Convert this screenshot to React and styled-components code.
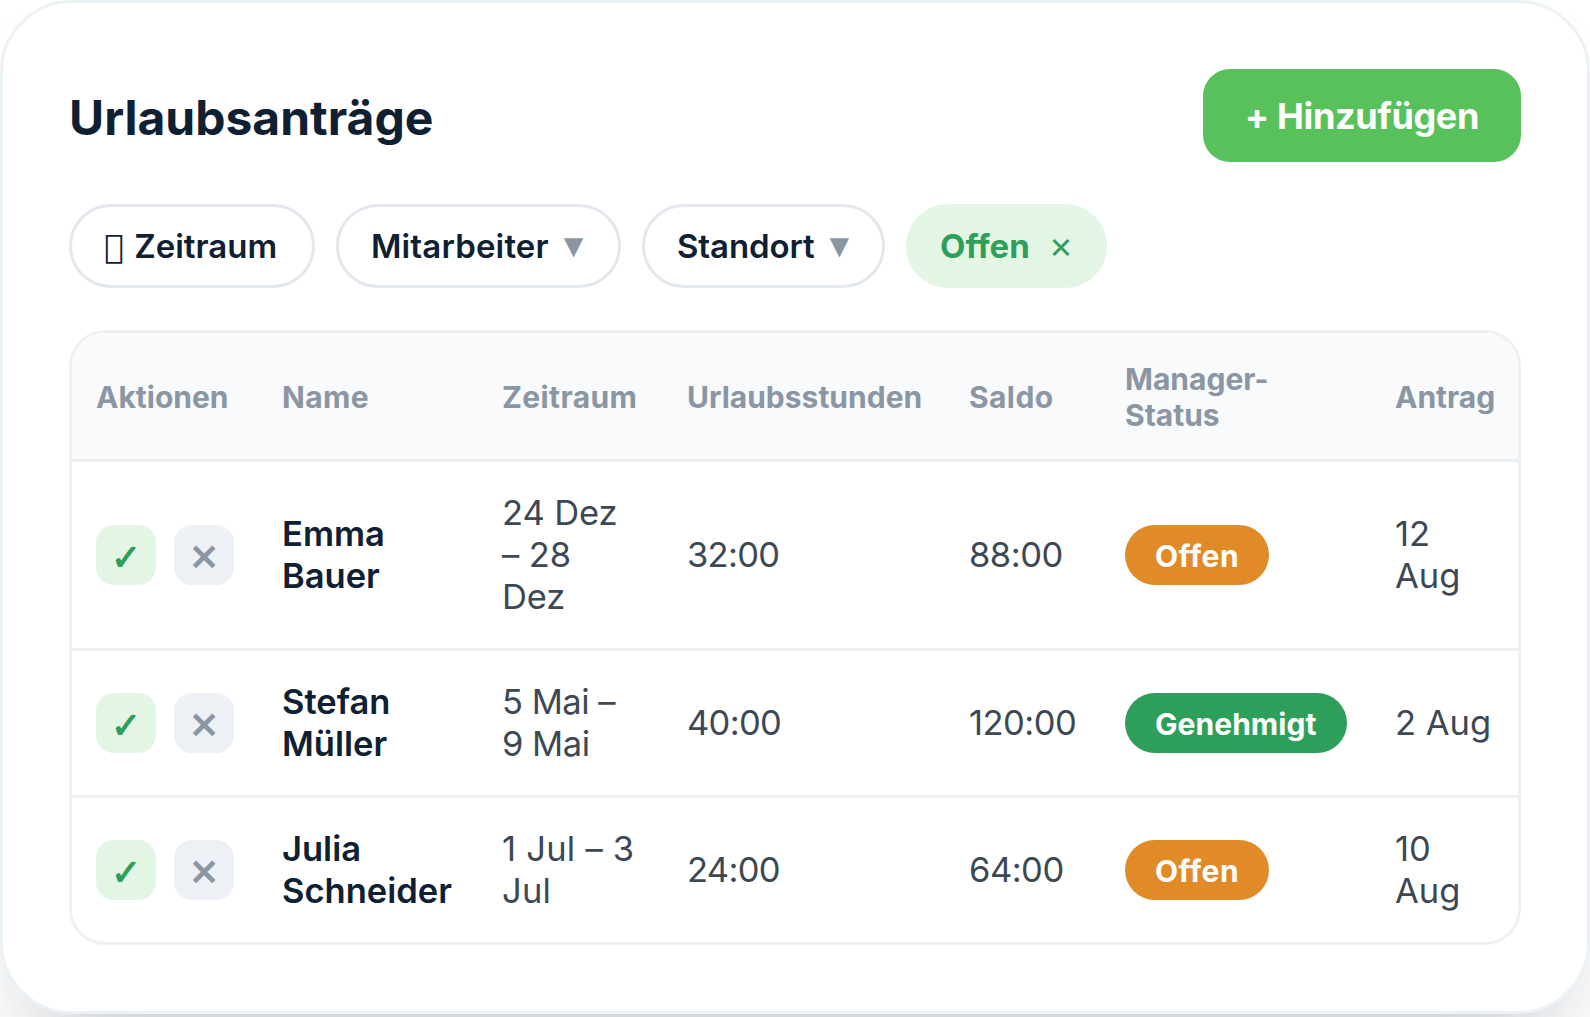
import React from "react";
import styled, { createGlobalStyle } from "styled-components";

const requests = [
  { name: "Emma Bauer", period: "24 Dez – 28 Dez", tracking: -0.1, hours: "32:00", balance: "88:00", status: "Offen", date: "12 Aug" },
  { name: "Stefan Müller", period: "5 Mai – 9 Mai", tracking: -0.5, hours: "40:00", balance: "120:00", status: "Genehmigt", date: "2 Aug" },
  { name: "Julia Schneider", period: "1 Jul – 3 Jul", tracking: 0.25, hours: "24:00", balance: "64:00", status: "Offen", date: "10 Aug" },
];

const columns = [
  { label: "Aktionen", width: 186 },
  { label: "Name", width: 220, tracking: 0.4 },
  { label: "Zeitraum", width: 185, tracking: 0.4 },
  { label: "Urlaubsstunden", width: 282 },
  { label: "Saldo", width: 156, tracking: 0.4 },
  { label: "Manager-Status", width: 270 },
  { label: "Antrag", width: 147 },
];

export default function App() {
  return (
    <>
      <GlobalStyle />
      <Card>
        <Header>
          <Title>Urlaubsanträge</Title>
          <AddButton>+ Hinzufügen</AddButton>
        </Header>
        <Filters>
          <Chip $width={246}><Glyph>{"\uE000"}</Glyph> Zeitraum</Chip>
          <Chip $width={285} $tracking={0.15}>Mitarbeiter <Caret>▼</Caret></Chip>
          <Chip $width={243} $tracking={-0.1}>Standort <Caret>▼</Caret></Chip>
          <Chip $width={201} $active>Offen <Clear>✕</Clear></Chip>
        </Filters>
        <TableBox>
          <Table>
            <colgroup>
              {columns.map((c) => <Col key={c.label} $width={c.width} />)}
            </colgroup>
            <thead>
              <tr>
                {columns.map((c) => <Th key={c.label} $tracking={c.tracking}>{c.label}</Th>)}
              </tr>
            </thead>
            <tbody>
              {requests.map((r) => (
                <Row key={r.name}>
                  <Td>
                    <Actions>
                      <ActionButton $approve>✓</ActionButton>
                      <ActionButton>✕</ActionButton>
                    </Actions>
                  </Td>
                  <NameCell>{r.name}</NameCell>
                  <Td $tracking={r.tracking}>{r.period}</Td>
                  <Td $tracking={-0.7}>{r.hours}</Td>
                  <Td $tracking={-0.5}>{r.balance}</Td>
                  <Td>
                    <Status $approved={r.status === "Genehmigt"}>{r.status}</Status>
                  </Td>
                  <Td>{r.date}</Td>
                </Row>
              ))}
            </tbody>
          </Table>
        </TableBox>
      </Card>
    </>
  );
}

const GlobalStyle = createGlobalStyle`
  * {
    box-sizing: border-box;
  }

  body {
    margin: 0;
    min-height: 1017px;
    background: #fff;
    font-family: Inter, sans-serif;
    overflow: hidden;
  }
`;

const Card = styled.div`
  width: 1590px;
  height: 1014px;
  padding: 66px;
  background: #fff;
  border: 3px solid #ebf2f5;
  border-radius: 72px;
  box-shadow: 0 60px 96px -36px rgba(15, 32, 51, 0.25);
`;

const Header = styled.div`
  display: flex;
  align-items: center;
  justify-content: space-between;
  margin-bottom: 42px;
`;

const Title = styled.div`
  padding-top: 4px;
  color: #0f2033;
  font-size: 48px;
  font-weight: 700;
  line-height: 60px;
`;

const AddButton = styled.button`
  height: 93px;
  padding: 2px 42px 0;
  border: none;
  border-radius: 27px;
  background: #59c15c;
  color: #fff;
  font-family: inherit;
  font-size: 36px;
  font-weight: 700;
  letter-spacing: -0.35px;
  line-height: 45px;
`;

const Filters = styled.div`
  display: flex;
  gap: 21px;
  margin-bottom: 42px;
`;

const Chip = styled.div`
  width: ${(p) => p.$width}px;
  height: 84px;
  padding: 18px 0 18px ${(p) => (p.$active ? 31 : 32)}px;
  border: 3px solid ${(p) => (p.$active ? "#e3f6e5" : "#e2e8ee")};
  border-radius: 42px;
  background: ${(p) => (p.$active ? "#e3f6e5" : "#fff")};
  color: ${(p) => (p.$active ? "#2e9f5b" : "#0f2033")};
  font-size: 33px;
  font-weight: ${(p) => (p.$active ? 700 : 600)};
  letter-spacing: ${(p) => p.$tracking || 0}px;
  line-height: 42px;
  white-space: nowrap;
`;

const Glyph = styled.span`
  margin-right: 2px;
  font-family: "DejaVu Sans", sans-serif;
  font-weight: 400;
  line-height: 1;
`;

const Caret = styled.span`
  color: #8a96a3;
  font-family: "Liberation Sans", sans-serif;
  line-height: 1;
  vertical-align: 1px;
`;

const Clear = styled.span`
  margin-left: 11px;
  font-family: "DejaVu Sans", sans-serif;
  font-size: 29px;
  line-height: 1;
`;

const TableBox = styled.div`
  border: 3px solid #edf1f4;
  border-radius: 36px;
  overflow: hidden;
`;

const Table = styled.table`
  width: 1446px;
  table-layout: fixed;
  border-collapse: separate;
  border-spacing: 0;
`;

const Col = styled.col`
  width: ${(p) => p.$width}px;
`;

const Th = styled.th`
  padding: 28px 24px 26px;
  background: #f9fafc;
  border-bottom: 3px solid #edf1f4;
  color: #8a96a3;
  font-size: 30px;
  font-weight: 700;
  letter-spacing: ${(p) => p.$tracking || 0}px;
  line-height: 36px;
  text-align: left;
`;

const Td = styled.td`
  padding: 30px 24px;
  border-bottom: 3px solid #edf1f4;
  color: #3c4853;
  font-size: 34.5px;
  letter-spacing: ${(p) => p.$tracking || 0}px;
  line-height: 42px;
  vertical-align: middle;
`;

const NameCell = styled(Td)`
  color: #0f2033;
  font-weight: 600;
`;

const Row = styled.tr`
  &:last-child td {
    border-bottom: none;
  }
`;

const Actions = styled.div`
  display: flex;
  gap: 18px;
`;

const ActionButton = styled.div`
  display: flex;
  align-items: center;
  justify-content: center;
  width: 60px;
  height: 60px;
  padding-top: 5px;
  border-radius: 18px;
  background: ${(p) => (p.$approve ? "#e3f6e5" : "#edf1f5")};
  color: ${(p) => (p.$approve ? "#2e9f5b" : "#8a96a3")};
  font-family: "Liberation Sans", sans-serif;
  font-size: 36px;
  font-weight: 700;
  line-height: 42px;
`;

const Status = styled.div`
  width: fit-content;
  height: 60px;
  padding: 13px 30px 11px;
  border-radius: 30px;
  background: ${(p) => (p.$approved ? "#2e9f5b" : "#e08a28")};
  color: #fff;
  font-size: 30px;
  font-weight: 700;
  letter-spacing: ${(p) => (p.$approved ? 0.05 : 0.5)}px;
  line-height: 36px;
`;
